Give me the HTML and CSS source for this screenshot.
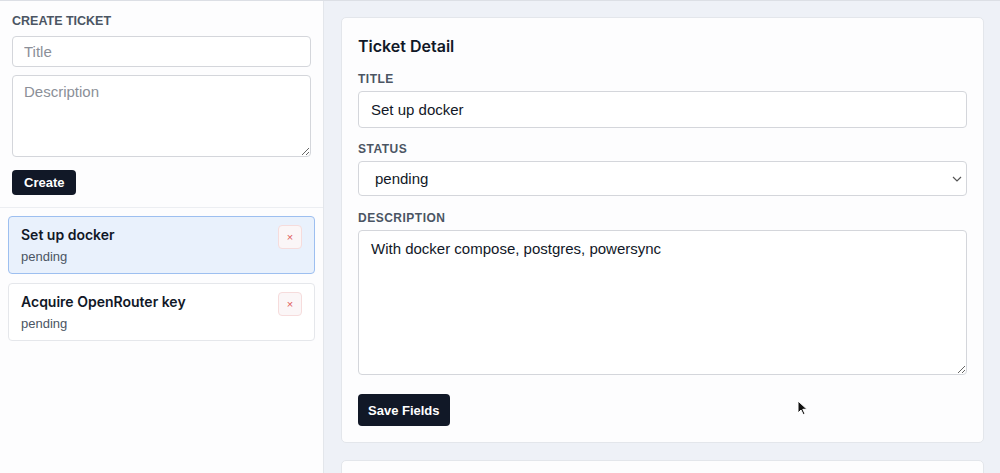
FILE: index.html
```html
<!DOCTYPE html>
<html lang="en">
<head>
    <meta charset="UTF-8">
    <title>Tickets</title>
    <link rel="stylesheet" href="styles.css">
</head>
<body>

    <aside class="sidebar">
        <form class="create">
            <h2 class="create-title">Create Ticket</h2>
            <input class="create-input" type="text" placeholder="Title">
            <textarea class="create-text" placeholder="Description"></textarea>
            <button type="button" class="btn btn-small">Create</button>
        </form>

        <ul class="tickets">
            <li class="ticket active">
                <div class="ticket-info">
                    <div class="ticket-name">Set up docker</div>
                    <div class="ticket-status">pending</div>
                </div>
                <button type="button" class="del">&times;</button>
            </li>
            <li class="ticket">
                <div class="ticket-info">
                    <div class="ticket-name">Acquire OpenRouter key</div>
                    <div class="ticket-status">pending</div>
                </div>
                <button type="button" class="del">&times;</button>
            </li>
        </ul>
    </aside>

    <main class="main">
        <section class="card">
            <h1 class="card-title">Ticket Detail</h1>

            <div class="field">
                <label class="label">Title</label>
                <input class="input" type="text" value="Set up docker">
            </div>

            <div class="field">
                <label class="label">Status</label>
                <div class="select-wrap">
                    <select class="input select">
                        <option>pending</option>
                        <option>in progress</option>
                        <option>done</option>
                    </select>
                    <svg class="chevron" width="10" height="6" viewBox="0 0 10 6"><path d="M1 1l4 4 4-4" fill="none" stroke="#555" stroke-width="1.2"/></svg>
                </div>
            </div>

            <div class="field field-wide">
                <label class="label">Description</label>
                <textarea class="input area">With docker compose, postgres, powersync</textarea>
            </div>

            <button type="button" class="btn btn-save">Save Fields</button>

            <svg class="cursor" width="12" height="16" viewBox="0 0 12 16"><path d="M1 1v12l3-3 2.2 4.6 1.8-.8L5.8 9.3H10z" fill="#111" stroke="#fff" stroke-width="1"/></svg>
        </section>

        <section class="card card-next"></section>
    </main>

</body>
</html>
```

FILE: styles.css
```css
html,body {
	margin:0;
	padding:0;
	height:100%;
	overflow:hidden;
}
body {
	display:flex;
	border-top:1px solid #dcdfe5;
	box-sizing:border-box;
	background:#eef1f7;
	color:#111827;
	font-family:"Liberation Sans", Arial, sans-serif;
}
input,textarea,select,button {
	font-family:inherit;
	outline:none;
	box-sizing:border-box;
}
.sidebar {
	width:324px;
	flex-shrink:0;
	background:#fdfdfe;
	border-right:1px solid #e3e6eb;
	box-sizing:border-box;
}
.create {
	display:flex;
	flex-direction:column;
	align-items:flex-start;
	padding:11px 12px 12px;
	border-bottom:1px solid #eceef2;
}
.create-title {
	margin:0 0 6px;
	font-size:12.5px;
	line-height:18px;
	text-transform:uppercase;
	color:#4b5563;
}
.create-input,.create-text {
	width:100%;
	border:1px solid #d4d6db;
	border-radius:4px;
	background:#fff;
	font-size:15px;
	padding:0 11px;
	color:#111827;
}
.create-input {
	height:31px;
	margin-bottom:8px;
}
.create-text {
	height:82px;
	padding-top:7px;
	margin-bottom:13px;
	resize:vertical;
}
.create-input::placeholder,.create-text::placeholder {
	color:#8b8f98;
}
.btn {
	border:none;
	background:#111827;
	color:#fff;
	font-weight:bold;
	border-radius:4px;
	cursor:pointer;
}
.btn-small {
	height:25px;
	padding:0 12px;
	font-size:13px;
}
.tickets {
	list-style:none;
	margin:0;
	padding:8px;
	display:flex;
	flex-direction:column;
	gap:9px;
}
.ticket {
	display:flex;
	justify-content:space-between;
	align-items:flex-start;
	padding:8px 12px 7px;
	border:1px solid #e5e7eb;
	border-radius:4px;
	background:#fff;
}
.ticket.active {
	background:#e9f1fc;
	border-color:#9dbff0;
}
.ticket-name {
	font-family:Inter, "Liberation Sans", sans-serif;
	font-size:14px;
	font-weight:600;
	line-height:20px;
}
.ticket-status {
	margin-top:3px;
	font-size:13px;
	line-height:18px;
	color:#4b5563;
}
.del {
	width:24px;
	height:24px;
	padding:0;
	border:1px solid #f6dcdc;
	border-radius:4px;
	background:#fbf6f7;
	color:#e05a5a;
	font-size:11px;
	line-height:20px;
	cursor:pointer;
}
.main {
	flex:1;
	display:flex;
	flex-direction:column;
	gap:17px;
	padding:16px 16px 0 17px;
	min-width:0;
}
.card {
	position:relative;
	flex-shrink:0;
	background:#fdfdfe;
	border:1px solid #e3e6eb;
	border-radius:5px;
	padding:16px;
}
.card-next {
	height:80px;
}
.card-title {
	margin:0;
	font-family:Inter, "Liberation Sans", sans-serif;
	font-size:16px;
	line-height:24px;
	font-weight:600;
}
.field {
	margin-top:13px;
}
.field-wide {
	margin-top:14px;
}
.label {
	display:block;
	margin-bottom:4px;
	font-size:12px;
	line-height:16px;
	font-weight:bold;
	letter-spacing:.5px;
	text-transform:uppercase;
	color:#4b5563;
}
.input {
	display:block;
	width:100%;
	height:37px;
	padding:0 12px;
	border:1px solid #d4d6db;
	border-radius:4px;
	background:#fff;
	color:#111827;
	font-size:15px;
}
.select-wrap {
	position:relative;
}
.select {
	height:35px;
	padding:0 16px;
	-webkit-appearance:none;
	appearance:none;
}
.chevron {
	position:absolute;
	right:5px;
	top:15px;
}
.area {
	height:145px;
	padding-top:9px;
	resize:vertical;
}
.btn-save {
	margin-top:19px;
	height:32px;
	padding:0 10px;
	font-size:13px;
}
.cursor {
	position:absolute;
	left:455px;
	top:382px;
}
```
